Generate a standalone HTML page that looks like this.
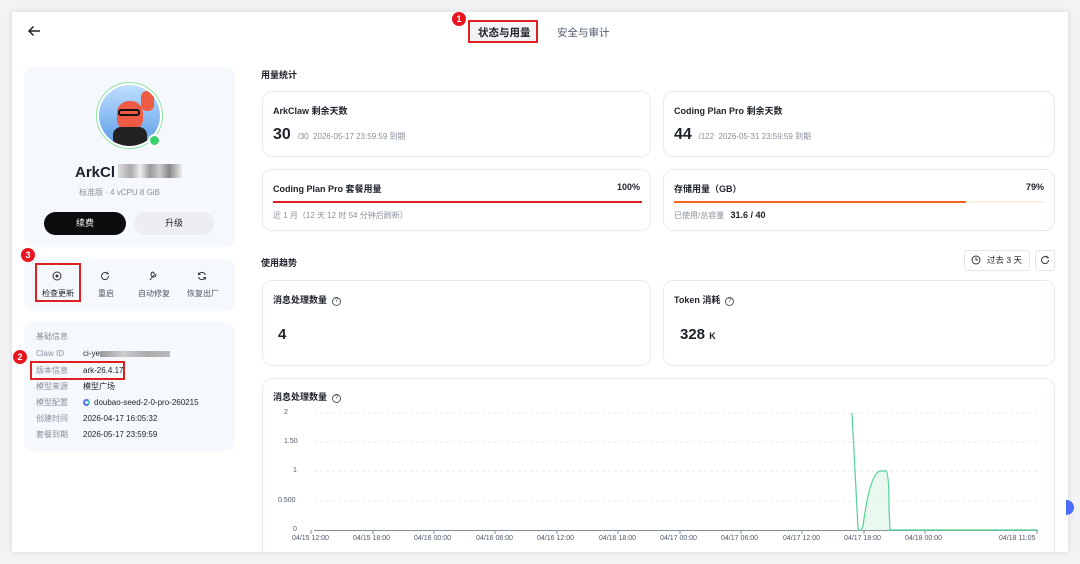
<!DOCTYPE html>
<html><head><meta charset="utf-8">
<style>
*{box-sizing:border-box;margin:0;padding:0}
body{width:1080px;height:564px;background:#f3f3f5;font-family:"Liberation Sans","Noto Sans CJK SC",sans-serif;color:#1d2129;position:relative;overflow:hidden}
.panel{position:absolute;left:12px;top:12px;width:1056px;height:540px;background:#fff;box-shadow:0 0 6px rgba(0,0,0,.12);overflow:hidden}
.a{position:absolute}
.card{position:absolute;border:1px solid #e8ebf0;border-radius:10px;background:#fff}
.lc{position:absolute;background:#f5f8fc;border-radius:10px}
.t{font-size:9px;font-weight:bold;white-space:nowrap}
.g{color:#86909c;font-size:8px;white-space:nowrap}
.red{position:absolute;border:2px solid #e02020}
.badge{position:absolute;width:14px;height:14px;border-radius:50%;background:#e8141e;color:#fff;font-size:9px;font-weight:bold;text-align:center;line-height:14px}
.row{position:absolute;left:12px;font-size:8px;white-space:nowrap}
.row span{color:#86909c;display:inline-block;width:47px}
.ax{position:absolute;font-size:7px;color:#4e5969;white-space:nowrap}
.q{display:inline-block;width:9px;height:9px;border:1px solid #4e5969;border-radius:50%;font-size:6px;line-height:7px;text-align:center;margin-left:5px;vertical-align:1px;font-weight:normal}
</style></head><body>
<div class="panel">
<svg class="a" style="left:15px;top:13px" width="14" height="12" viewBox="0 0 14 12"><path d="M13 6H2M6.5 1.5L2 6l4.5 4.5" fill="none" stroke="#1d2129" stroke-width="1.5"/></svg>
<div class="a" style="left:458px;top:10px;width:66px;height:20px;background:#f2f3f5"></div>
<div class="red" style="left:456px;top:8px;width:70px;height:23px"></div>
<div class="a t" style="left:466px;top:13px;font-size:10.5px">状态与用量</div>
<div class="a" style="left:545px;top:13px;font-size:10.5px;color:#4e5969">安全与审计</div>
<div class="badge" style="left:440px;top:0px">1</div>

<div class="lc" style="left:12px;top:55px;width:211px;height:180px"></div>
<div class="a" style="left:84px;top:70px;width:67px;height:67px;border-radius:50%;border:1.5px solid #8ee5a5;background:#fff;padding:2px"><div style="width:100%;height:100%;border-radius:50%;background:linear-gradient(#bfe0ff,#5b9ce8);position:relative;overflow:hidden"><div style="position:absolute;left:18px;top:16px;width:26px;height:30px;background:#ee5a44;border-radius:12px"></div><div style="position:absolute;left:14px;top:42px;width:34px;height:20px;background:#222;border-radius:8px"></div><div style="position:absolute;left:19px;top:24px;width:22px;height:7px;border:2px solid #111;border-radius:3px"></div><div style="position:absolute;left:42px;top:6px;width:13px;height:20px;background:#ee5a44;border-radius:6px"></div></div></div>
<div class="a" style="left:136px;top:122px;width:13px;height:13px;border-radius:50%;background:#3ad26a;border:2px solid #fff"></div>
<div class="a" style="left:63px;top:152px;font-size:15px;font-weight:bold">ArkCl</div>
<div class="a" style="left:106px;top:152px;width:64px;height:14px;background:linear-gradient(90deg,#ddd,#aaa 20%,#eee 35%,#999 50%,#ccc 65%,#888 80%,#eee)"></div>
<div class="a g" style="left:67px;top:175px">标准版 · 4 vCPU 8 GiB</div>
<div class="a" style="left:32px;top:200px;width:82px;height:23px;border-radius:12px;background:#0c0c0e;color:#fff;font-size:9px;text-align:center;line-height:23px">续费</div>
<div class="a" style="left:122px;top:200px;width:80px;height:23px;border-radius:12px;background:#eceef3;font-size:9px;text-align:center;line-height:23px">升级</div>

<div class="lc" style="left:12px;top:247px;width:211px;height:52px"></div>
<div class="red" style="left:23px;top:251px;width:46px;height:39px"></div>
<div class="badge" style="left:9px;top:236px">3</div>
<svg class="a" style="left:40px;top:259px" width="10" height="10"><circle cx="5" cy="5" r="4" fill="none" stroke="#333" stroke-width="1"/><circle cx="5" cy="5" r="1.5" fill="#333"/></svg>
<svg class="a" style="left:88px;top:259px" width="10" height="10"><path d="M8.5 5A3.5 3.5 0 1 1 7 2.2M7 .8v2h2" fill="none" stroke="#333" stroke-width="1"/></svg>
<svg class="a" style="left:136px;top:258px" width="10" height="11"><path d="M2 10L6 5M5 2a2.5 2.5 0 1 0 3 3L6.5 4z" fill="none" stroke="#333" stroke-width="1"/></svg>
<svg class="a" style="left:185px;top:259px" width="10" height="10"><path d="M8.5 4A3.6 3.6 0 0 0 1.8 3.5M1.5 6a3.6 3.6 0 0 0 6.7.5M1.6 1.5v2h2M8.4 8.5v-2h-2" fill="none" stroke="#333" stroke-width="1"/></svg>
<div class="a" style="left:30px;top:276px;font-size:8px">检查更新</div>
<div class="a" style="left:86px;top:276px;font-size:8px;color:#4e5969">重启</div>
<div class="a" style="left:126px;top:276px;font-size:8px;color:#4e5969">自动修复</div>
<div class="a" style="left:175px;top:276px;font-size:8px;color:#4e5969">恢复出厂</div>

<div class="lc" style="left:12px;top:310px;width:211px;height:129px">
<div class="row" style="top:9px"><span>基础信息</span></div>
<div class="row" style="top:27px"><span>Claw ID</span>ci-ye<i style="display:inline-block;width:70px;height:6px;background:linear-gradient(90deg,#999,#ccc,#aaa,#bbb);vertical-align:middle"></i></div>
<div class="row" style="top:43px"><span>版本信息</span>ark-26.4.17</div>
<div class="row" style="top:59px"><span>模型来源</span>模型广场</div>
<div class="row" style="top:75px"><span>模型配置</span><i style="display:inline-block;width:7px;height:7px;border-radius:50%;border:2px solid #5b6cf0;border-right-color:#3ad2c0;vertical-align:-1px;margin-right:4px"></i>doubao-seed-2-0-pro-260215</div>
<div class="row" style="top:91px"><span>创建时间</span>2026-04-17 16:05:32</div>
<div class="row" style="top:107px"><span>套餐到期</span>2026-05-17 23:59:59</div>
</div>
<div class="red" style="left:18px;top:349px;width:95px;height:19px"></div>
<div class="badge" style="left:1px;top:338px">2</div>

<div class="a t" style="left:249px;top:56px">用量统计</div>
<div class="card" style="left:250px;top:79px;width:389px;height:66px">
<div class="a t" style="left:10px;top:12px">ArkClaw 剩余天数</div>
<div class="a" style="left:10px;top:34px;font-size:16px;font-weight:bold;white-space:nowrap">30 <span class="g" style="font-weight:normal">&nbsp;/30 &nbsp;2026-05-17 23:59:59 到期</span></div></div>
<div class="card" style="left:651px;top:79px;width:392px;height:66px">
<div class="a t" style="left:10px;top:12px">Coding Plan Pro 剩余天数</div>
<div class="a" style="left:10px;top:34px;font-size:16px;font-weight:bold;white-space:nowrap">44 <span class="g" style="font-weight:normal">&nbsp;/122 &nbsp;2026-05-31 23:59:59 到期</span></div></div>
<div class="card" style="left:250px;top:157px;width:389px;height:62px">
<div class="a t" style="left:10px;top:12px">Coding Plan Pro 套餐用量</div>
<div class="a t" style="right:10px;top:12px">100%</div>
<div class="a" style="left:10px;top:31px;width:369px;height:2px;background:#e02020"></div>
<div class="a g" style="left:10px;top:40px">近 1 月（12 天 12 时 54 分钟后刷新）</div></div>
<div class="card" style="left:651px;top:157px;width:392px;height:62px">
<div class="a t" style="left:10px;top:12px">存储用量（GB）</div>
<div class="a t" style="right:10px;top:12px">79%</div>
<div class="a" style="left:10px;top:31px;width:370px;height:2px;background:#fdeee4"><div style="width:79%;height:2px;background:#f5641e"></div></div>
<div class="a g" style="left:10px;top:40px">已使用/总容量 <b style="color:#1d2129;font-size:9px;margin-left:4px">31.6 / 40</b></div></div>

<div class="a t" style="left:249px;top:244px">使用趋势</div>
<div class="a" style="left:952px;top:238px;width:66px;height:21px;border:1px solid #e5e6eb;border-radius:3px;font-size:8.5px;line-height:19px;padding-left:22px;color:#1d2129">过去 3 天</div>
<svg class="a" style="left:959px;top:243px" width="10" height="10"><circle cx="5" cy="5" r="4" fill="none" stroke="#333"/><path d="M5 2.5V5h2" fill="none" stroke="#333"/></svg>
<div class="a" style="left:1023px;top:238px;width:20px;height:21px;border:1px solid #e5e6eb;border-radius:3px"></div>
<svg class="a" style="left:1028px;top:243px" width="10" height="10"><path d="M8.5 5A3.5 3.5 0 1 1 7 2.2M7 .8v2h2" fill="none" stroke="#333"/></svg>

<div class="card" style="left:250px;top:268px;width:389px;height:86px">
<div class="a t" style="left:10px;top:12px">消息处理数量<span class="q">?</span></div>
<div class="a" style="left:15px;top:45px;font-size:15px;font-weight:bold">4</div></div>
<div class="card" style="left:651px;top:268px;width:392px;height:86px">
<div class="a t" style="left:10px;top:12px">Token 消耗<span class="q">?</span></div>
<div class="a" style="left:16px;top:45px;font-size:15px;font-weight:bold">328 <span style="font-size:9px">K</span></div></div>

<div class="card" style="left:250px;top:366px;width:793px;height:190px">
<div class="a t" style="left:10px;top:11px">消息处理数量<span class="q">?</span></div></div>
<svg class="a" style="left:250px;top:366px" width="793" height="180">
<g stroke="#dfe3ec" stroke-dasharray="3 3" stroke-width="0.8"><line x1="52" x2="776" y1="35" y2="35"/><line x1="52" x2="776" y1="64" y2="64"/><line x1="52" x2="776" y1="93" y2="93"/><line x1="52" x2="776" y1="123" y2="123"/></g>
<line x1="52" x2="776" y1="152.5" y2="152.5" stroke="#86909c" stroke-width="1"/>
<g stroke="#86909c"><line x1="49" x2="49" y1="152" y2="156"/><line x1="111" x2="111" y1="152" y2="156"/><line x1="172" x2="172" y1="152" y2="156"/><line x1="233" x2="233" y1="152" y2="156"/><line x1="295" x2="295" y1="152" y2="156"/><line x1="356" x2="356" y1="152" y2="156"/><line x1="418" x2="418" y1="152" y2="156"/><line x1="479" x2="479" y1="152" y2="156"/><line x1="540" x2="540" y1="152" y2="156"/><line x1="602" x2="602" y1="152" y2="156"/><line x1="663" x2="663" y1="152" y2="156"/><line x1="775" x2="775" y1="152" y2="156"/></g>
<path d="M598 152Q599 154 601 148Q608 95 618 93L624 93Q627 95 627 130L628 152Z" fill="#e3f7ec" opacity=".8"/>
<path d="M590 35L596 150Q598 156 601 148Q608 95 618 93L624 93Q627 95 627 130L628 152L775 152" fill="none" stroke="#4fd494" stroke-width="1.2"/>
</svg>
<div class="ax" style="left:272px;top:397px">2</div>
<div class="ax" style="left:272px;top:426px">1.50</div>
<div class="ax" style="left:281px;top:455px">1</div>
<div class="ax" style="left:266px;top:485px">0.500</div>
<div class="ax" style="left:281px;top:514px">0</div>
<div class="ax" style="left:280px;top:523px">04/15 12:00</div>
<div class="ax" style="left:341px;top:523px">04/15 18:00</div>
<div class="ax" style="left:402px;top:523px">04/16 00:00</div>
<div class="ax" style="left:464px;top:523px">04/16 06:00</div>
<div class="ax" style="left:525px;top:523px">04/16 12:00</div>
<div class="ax" style="left:587px;top:523px">04/16 18:00</div>
<div class="ax" style="left:648px;top:523px">04/17 00:00</div>
<div class="ax" style="left:709px;top:523px">04/17 06:00</div>
<div class="ax" style="left:771px;top:523px">04/17 12:00</div>
<div class="ax" style="left:832px;top:523px">04/17 18:00</div>
<div class="ax" style="left:893px;top:523px">04/18 00:00</div>
<div class="ax" style="left:987px;top:523px">04/18 11:05</div>
</div>
<div class="a" style="left:1066px;top:500px;width:8px;height:15px;border-radius:0 8px 8px 0;background:#4a6cf7"></div>
</body></html>
